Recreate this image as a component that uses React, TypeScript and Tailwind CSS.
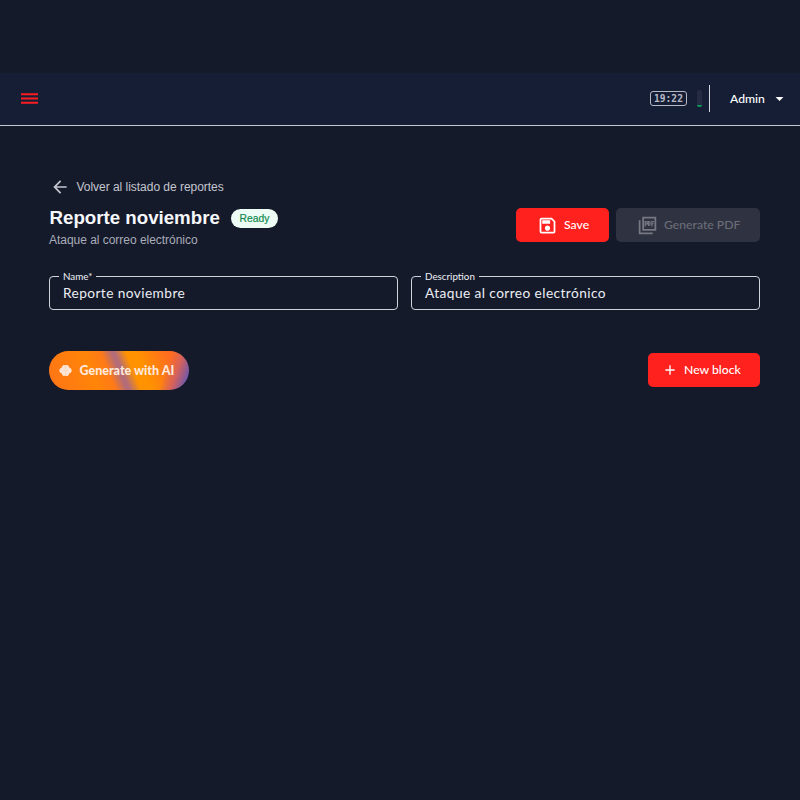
import type { ReactNode } from 'react';
import { MdAdd, MdArrowBack, MdArrowDropDown, MdOutlineSave } from 'react-icons/md';

function MenuIcon() {
  return (
    <svg width="21" height="21" viewBox="0 0 21 21" stroke="currentColor" strokeWidth="1.9">
      <path d="M2 6.3h17M2 10.5h17M2 14.7h17" />
    </svg>
  );
}

function PdfIcon() {
  return (
    <svg width="21" height="21" viewBox="0 0 24 24" fill="none" stroke="#777982" strokeWidth="2">
      <path d="M3 6v15h15" />
      <rect x="7" y="3" width="14" height="14" />
      <path d="M9.3 13V7.5h1.2a1.3 1.3 0 0 1 0 2.8H9.3M13 7.5v4.3h.8c1.6 0 1.6-4.3 0-4.3zM17 13V7.5h2.2M17 10h2" strokeWidth="1.4" />
    </svg>
  );
}

function BrainIcon() {
  return (
    <svg width="13" height="13" viewBox="0 0 13 13" fill="none">
      <path
        d="M4 1.7h5L10 4 12 5v3L10 9l-1 2.3H4L3 9 1 8V5l2-1z"
        fill="#ffe5d5"
        stroke="#ffe5d5"
        strokeLinejoin="round"
      />
      <path d="M6.5 2v3M4.7 6.5h3.6M6.5 8v3" stroke="#f3c6a9" strokeWidth=".6" />
    </svg>
  );
}

function Header() {
  return (
    <header className="flex h-[53px] items-center justify-between border-b border-[#c3c7d2] bg-[#151e35] pb-[2px] pl-[19px] pr-[11px]">
      <button aria-label="Menu" className="text-[#fb1c22]">
        <MenuIcon />
      </button>

      <div className="flex items-center">
        <span className="flex h-[15px] w-[37px] items-center justify-center rounded-[3px] border border-[#b5b9c4] pt-px font-['DejaVu_Sans_Mono',monospace] text-[9.6px] font-bold leading-none text-[#b5b9c4]">
          19:22
        </span>
        {/* Session meter */}
        <div className="ml-[10px] flex h-[17px] w-[5px] flex-col justify-end overflow-hidden rounded-[2px] bg-[#252b40]">
          <div className="h-[2px] bg-[#079a5b]" />
        </div>
        <div className="ml-[7px] h-[27px] w-px bg-[#d3d6df]" />
        <button className="ml-[20px] flex items-center text-[12.2px] font-medium leading-none text-white">
          <span className="w-[40px] pt-[2px] text-left">Admin</span>
          <MdArrowDropDown size={19} />
        </button>
      </div>
    </header>
  );
}

interface FieldProps {
  label: string;
  value: string;
}

function Field({ label, value }: FieldProps) {
  return (
    <fieldset className="h-[39px] min-w-0 flex-1 rounded-[4px] border border-[#d0d3dc] pl-[9px]">
      <legend className="h-[11px] px-[4px] text-[9.8px] leading-[11px] text-[#eef0f5]">{label}</legend>
      <div className="pl-[4px] pt-[2px] text-[13.7px] leading-[18px] tracking-[0.42px] text-[#eceef3]">{value}</div>
    </fieldset>
  );
}

interface ActionButtonProps {
  icon: ReactNode;
  children: ReactNode;
  className: string;
  disabled?: boolean;
}

function ActionButton({ icon, children, className, disabled }: ActionButtonProps) {
  return (
    <button
      disabled={disabled}
      className={`flex h-[34px] items-center rounded-[5px] text-[12.2px] font-medium leading-none ${className}`}
    >
      {icon}
      {children}
    </button>
  );
}

export default function App() {
  return (
    <div className="min-h-screen bg-[#151a2b] pt-[73px] font-[Lato,sans-serif]">
      <Header />

      <main className="pl-[49px] pr-[40px] pt-[51px]">
        <a className="flex h-5 w-max items-center gap-[7px] pl-[0.5px] font-['Liberation_Sans',sans-serif] text-[12px] tracking-[-0.03px] text-[#c4c6cf]">
          <MdArrowBack size={20} />
          Volver al listado de reportes
        </a>

        <div className="mt-[8px] flex items-start justify-between">
          <div className="font-['Liberation_Sans',sans-serif]">
            <div className="flex h-[27px] items-center">
              <h1 className="w-[182px] whitespace-nowrap pl-[0.5px] text-[18.7px] font-bold leading-none text-[#f6f7fa]">
                Reporte noviembre
              </h1>
              <span className="flex h-[19px] w-[47px] items-center justify-center rounded-full bg-[#edfdf5] text-[10.3px] text-[#138a50] [-webkit-text-stroke:0.2px_#138a50]">
                Ready
              </span>
            </div>
            <p className="text-[12px] leading-[16px] tracking-[-0.03px] text-[#a9acb8]">Ataque al correo electrónico</p>
          </div>

          <div className="mt-[3px] flex gap-[7px]">
            <ActionButton className="w-[93px] gap-[6px] bg-[#ff211e] pl-[21px] text-white" icon={<MdOutlineSave size={21} />}>
              Save
            </ActionButton>
            <ActionButton disabled className="w-[144px] gap-[6px] bg-[#2f3241] pl-[21px] text-[#6b6d77]" icon={<PdfIcon />}>
              Generate PDF
            </ActionButton>
          </div>
        </div>

        <div className="mt-[23px] flex gap-[13px]">
          <Field label="Name*" value="Reporte noviembre" />
          <Field label="Description" value="Ataque al correo electrónico" />
        </div>

        <div className="mt-[41px] flex items-start justify-between">
          <button className="flex h-[39px] w-[140px] items-center rounded-full bg-[linear-gradient(110deg,transparent_80%,#d5625b_88%,#6657b3_97%),linear-gradient(68deg,#ff7417_0%,#ff8508_32%,#ff7a17_43%,transparent_50%,transparent_52%,#ff9200_59%,#ff9200_66%,#ff6c20_86%)] bg-[#b36c78] pl-[10px] text-[12.5px] font-black leading-none text-[#ffe9dc]">
            <BrainIcon />
            <span className="ml-[7.5px] whitespace-nowrap pt-px">Generate with AI</span>
          </button>
          <ActionButton
            className="mt-[2px] w-[112px] gap-[6px] bg-[#ff211e] pl-[14px] text-white"
            icon={<MdAdd size={16} />}
          >
            New block
          </ActionButton>
        </div>
      </main>
    </div>
  );
}
